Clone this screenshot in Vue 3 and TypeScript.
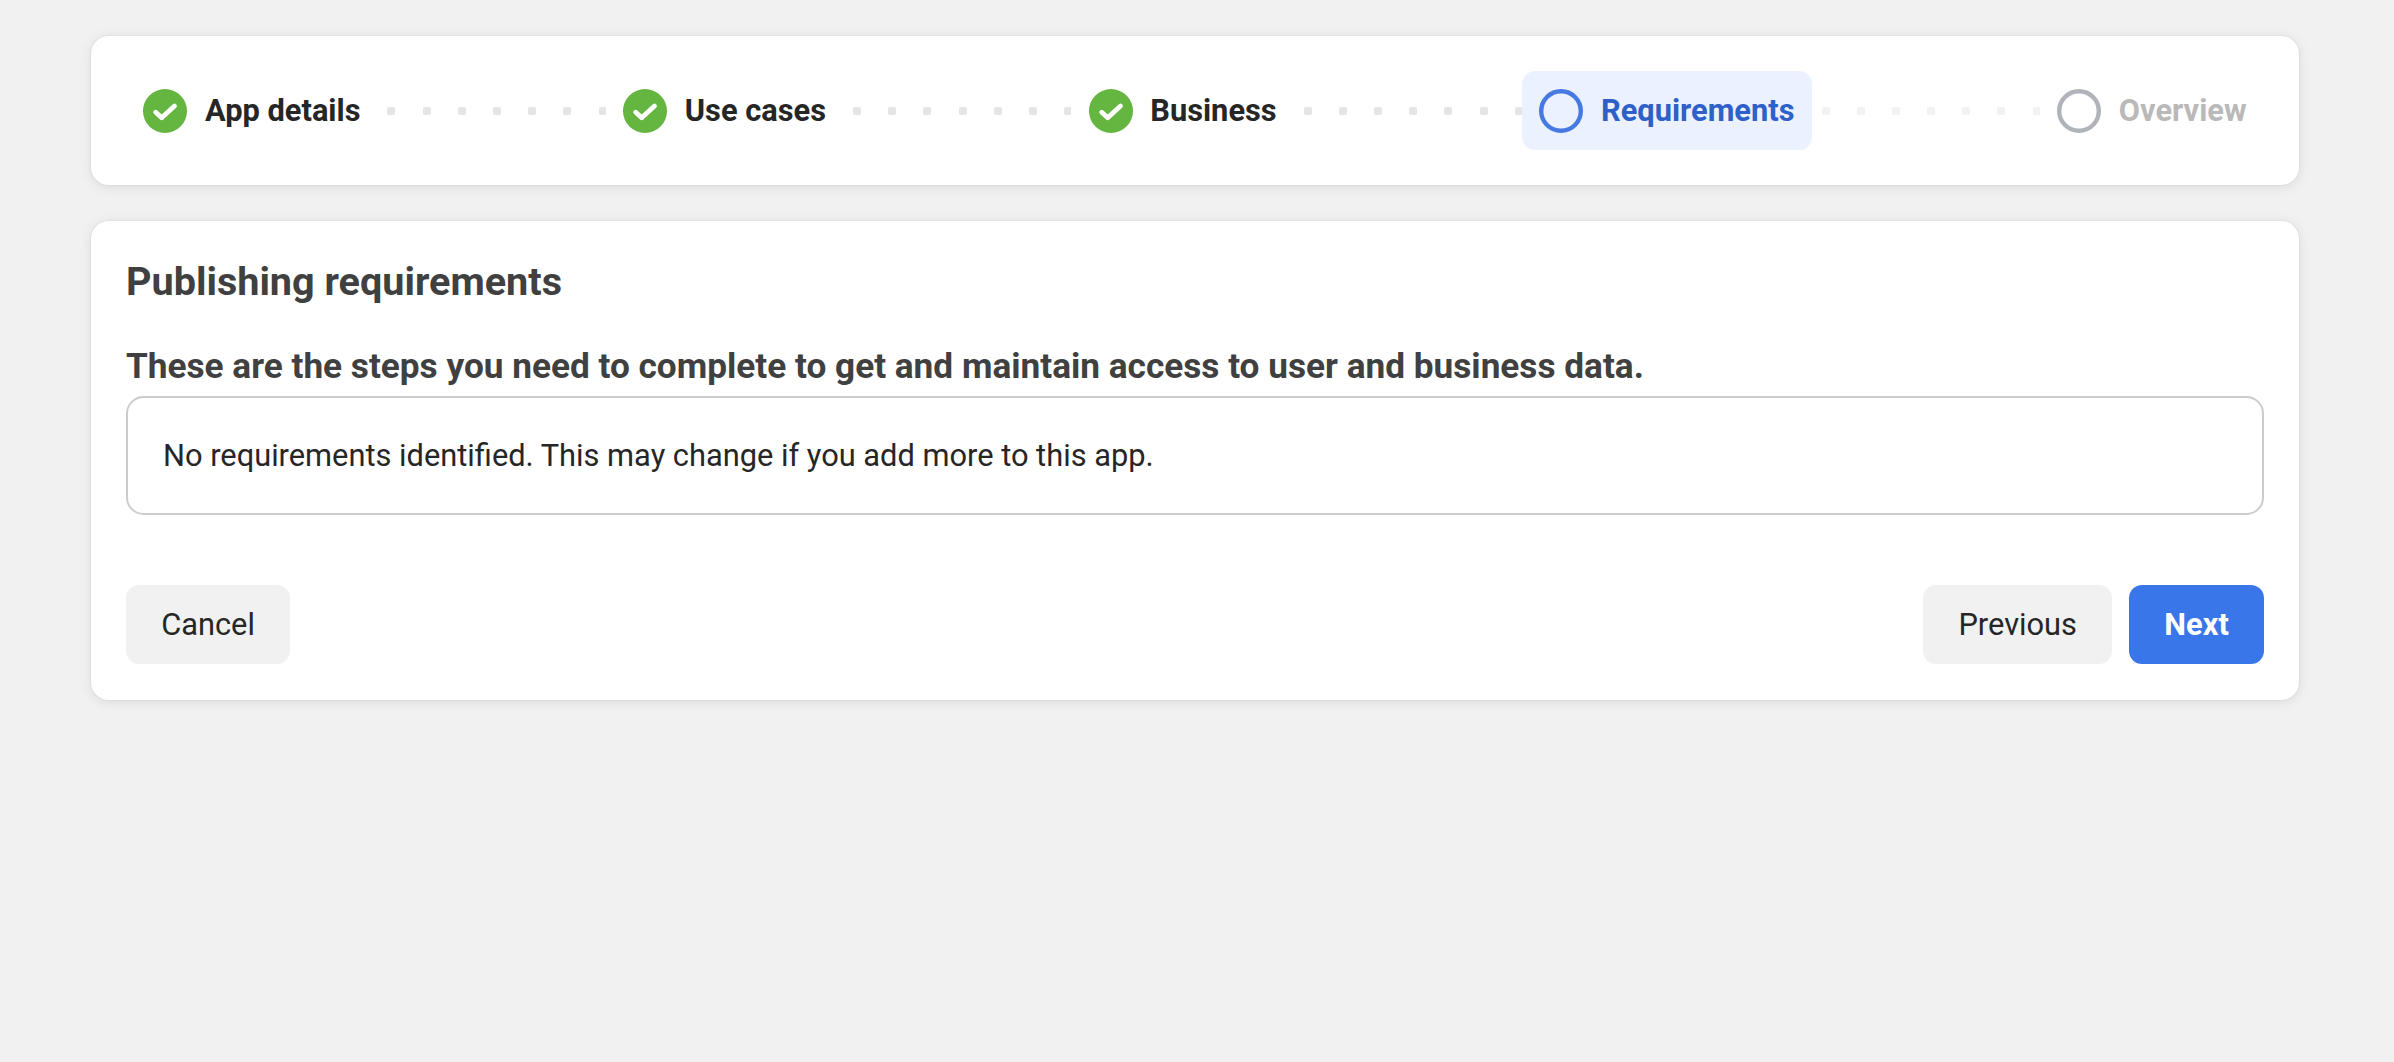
<script setup lang="ts">
type StepState = 'done' | 'current' | 'upcoming'

interface Step {
  label: string
  state: StepState
}

const steps: Step[] = [
  { label: 'App details', state: 'done' },
  { label: 'Use cases', state: 'done' },
  { label: 'Business', state: 'done' },
  { label: 'Requirements', state: 'current' },
  { label: 'Overview', state: 'upcoming' },
]

const dotsPerConnector = 7
</script>

<template>
  <main class="page">
    <nav class="card stepper">
      <template v-for="(step, index) in steps" :key="step.label">
        <div v-if="index > 0" class="connector" :class="{ faded: step.state === 'upcoming' }">
          <span v-for="n in dotsPerConnector" :key="n" class="dot"></span>
        </div>
        <div class="step" :class="step.state">
          <svg v-if="step.state === 'done'" class="icon" viewBox="0 0 44 44">
            <circle class="disc" cx="22" cy="22" r="22" />
            <path class="tick" d="M12.7 23.2 L18.7 28.8 L31.5 17.1" />
          </svg>
          <svg v-else class="icon" viewBox="0 0 44 44">
            <circle class="ring" cx="22" cy="22" r="19.8" />
          </svg>
          <span class="label">{{ step.label }}</span>
        </div>
      </template>
    </nav>

    <section class="card panel">
      <h1 class="title">Publishing requirements</h1>
      <h2 class="subtitle">
        These are the steps you need to complete to get and maintain access to user and business data.
      </h2>
      <div class="notice">No requirements identified. This may change if you add more to this app.</div>
      <footer class="actions">
        <button class="button" type="button">Cancel</button>
        <div class="group">
          <button class="button" type="button">Previous</button>
          <button class="button primary" type="button">Next</button>
        </div>
      </footer>
    </section>
  </main>
</template>

<style>
body {
  background: #f1f1f1;
}
</style>

<style scoped>
.page {
  box-sizing: border-box;
  display: flex;
  flex-direction: column;
  gap: 36px;
  min-height: 1062px;
  padding: 36px 95px 0 91px;
  font-family: Roboto, 'Liberation Sans', sans-serif;
  font-size: 30.8px;
  color: #262626;
}

.card {
  box-sizing: border-box;
  border-radius: 17.6px;
  background: #fff;
  box-shadow: 0 0 2px rgba(0, 0, 0, 0.12), 0 2px 13px rgba(0, 0, 0, 0.09);
}

.stepper {
  display: flex;
  align-items: center;
  height: 149px;
  padding: 0 34.8px;
}

.step {
  box-sizing: border-box;
  display: flex;
  flex: none;
  align-items: center;
  gap: 17.6px;
  height: 79px;
  padding: 0 17.6px;
  border-radius: 13.2px;
  font-weight: 700;
}

.current {
  background: #ebf1fe;
  color: #2e60c9;
}

.upcoming {
  color: #b9b9b9;
}

.icon {
  display: block;
  width: 44px;
  height: 44px;
}

.disc {
  fill: #65b541;
}

.tick {
  fill: none;
  stroke: #fff;
  stroke-width: 4.8;
  stroke-linecap: round;
  stroke-linejoin: round;
}

.ring {
  fill: none;
  stroke: #b0b3b9;
  stroke-width: 4.4;
}

.current .ring {
  stroke: #4779e2;
}

.label {
  line-height: 44px;
  white-space: nowrap;
}

.connector {
  display: flex;
  flex: 1 1 0;
  gap: 27.2px;
  min-width: 0;
  padding-left: 9.4px;
  overflow: hidden;
}

.dot {
  flex: none;
  width: 8px;
  height: 8px;
  border-radius: 2px;
  background: #e5e5e5;
}

.faded .dot {
  background: #f2f2f2;
}

.panel {
  height: 479px;
  padding: 35px;
}

.title {
  margin: 0;
  color: #404040;
  font-size: 39.6px;
  font-weight: 700;
  line-height: 52px;
}

.subtitle {
  margin: 36px 0 0;
  color: #404040;
  font-size: 35.2px;
  font-weight: 700;
  line-height: 44px;
}

.notice {
  box-sizing: border-box;
  height: 119px;
  margin-top: 8px;
  padding: 36px 35px 35px;
  border: 2px solid #ccc;
  border-radius: 17.6px;
  line-height: 44px;
}

.actions {
  display: flex;
  justify-content: space-between;
  margin-top: 70px;
}

.group {
  display: flex;
  gap: 17px;
}

.button {
  height: 79px;
  padding: 0 35.2px;
  border: 0;
  border-radius: 13.2px;
  background: #f1f1f1;
  color: #262626;
  font: inherit;
}

.primary {
  background: #3976e9;
  color: #fff;
  font-weight: 700;
}
</style>
